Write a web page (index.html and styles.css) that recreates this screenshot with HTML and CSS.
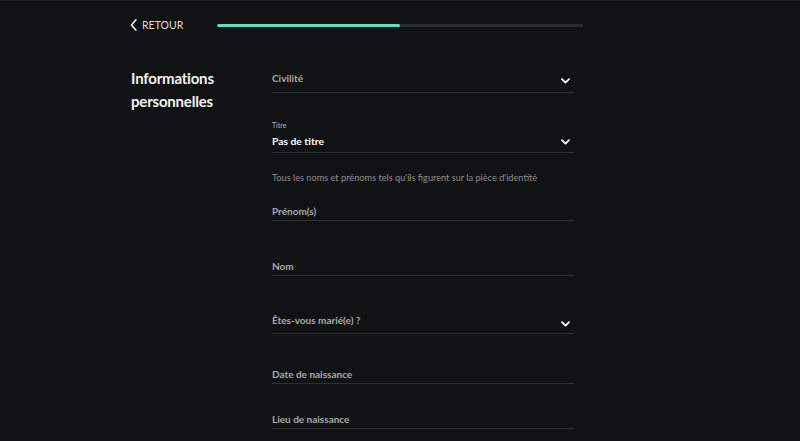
FILE: index.html
```html
<!DOCTYPE html>
<html lang="fr">
<head>
<meta charset="utf-8">
<title>Informations personnelles</title>
<link rel="stylesheet" href="styles.css">
</head>
<body>
<div class="page">
  <header class="topbar">
    <a class="back" href="#">
      <svg class="back-icon" width="7" height="12" viewBox="0 0 7 12"><path d="M5.8 1 1.5 6l4.3 5" fill="none" stroke="#e6e6e6" stroke-width="1.8" stroke-linecap="round" stroke-linejoin="round"/></svg>
      <span>RETOUR</span>
    </a>
    <div class="progress"><div class="progress-fill" style="width:50%"></div></div>
  </header>
  <main class="content">
    <h1 class="section-title">Informations<br>personnelles</h1>
    <form class="form">
      <div class="field select f-civ">
        <span class="label">Civilité</span>
        <svg class="chev" width="9" height="6" viewBox="0 0 9 6"><path d="M1 1.2 4.5 4.6 8 1.2" fill="none" stroke="#fff" stroke-width="1.8" stroke-linecap="round" stroke-linejoin="round"/></svg>
      </div>
      <div class="field select f-titre">
        <div class="stack">
          <span class="mini">Titre</span>
          <span class="value">Pas de titre</span>
        </div>
        <svg class="chev" width="9" height="6" viewBox="0 0 9 6"><path d="M1 1.2 4.5 4.6 8 1.2" fill="none" stroke="#fff" stroke-width="1.8" stroke-linecap="round" stroke-linejoin="round"/></svg>
      </div>
      <p class="helper">Tous les noms et prénoms tels qu'ils figurent sur la pièce d'identité</p>
      <div class="field text f-prenom"><span class="label">Prénom(s)</span></div>
      <div class="field text f-nom"><span class="label">Nom</span></div>
      <div class="field select f-marie">
        <span class="label">Êtes-vous marié(e) ?</span>
        <svg class="chev" width="9" height="6" viewBox="0 0 9 6"><path d="M1 1.2 4.5 4.6 8 1.2" fill="none" stroke="#fff" stroke-width="1.8" stroke-linecap="round" stroke-linejoin="round"/></svg>
      </div>
      <div class="field text f-date"><span class="label">Date de naissance</span></div>
      <div class="field text f-lieu"><span class="label">Lieu de naissance</span></div>
    </form>
  </main>
</div>
</body>
</html>
```
FILE: styles.css
```css
* { box-sizing: border-box; }
html, body { margin: 0; padding: 0; }
body {
  background: #111214;
  font-family: Lato, "Noto Sans", "Liberation Sans", sans-serif;
  color: #fff;
  height: 441px;
  overflow: hidden;
  border-top: 1px solid #1d1e20;
}
.page { padding-left: 130px; }
.topbar {
  display: flex;
  align-items: center;
  height: 16px;
  margin-top: 16px;
}
.back {
  display: flex;
  align-items: center;
  gap: 5px;
  color: #dcdcdc;
  text-decoration: none;
  font-size: 10.5px;
  width: 87px;
}
.progress {
  width: 366px;
  height: 3px;
  margin-top: 1px;
  background: #2b2c2e;
  border-radius: 2px;
  overflow: hidden;
}
.progress-fill { height: 100%; background: #5fe0c6; border-radius: 2px; }
.content { display: flex; }
.section-title {
  width: 141px;
  margin: 34px 0 0 1px;
  font-size: 15px;
  line-height: 23px;
  font-weight: 700;
  letter-spacing: -0.2px;
  color: #f2f2f2;
}
.form { width: 302px; margin: 0; }
.field {
  display: flex;
  align-items: flex-end;
  justify-content: space-between;
  border-bottom: 1px solid #2e2f31;
}
.field.text { padding-bottom: 1px; }
.label {
  font-size: 10px;
  line-height: 16px;
  font-weight: 700;
  color: #a9aaad;
}
.chev { margin-right: 4px; margin-bottom: 2px; }
.stack { display: flex; flex-direction: column; }
.mini { font-size: 7px; line-height: 10px; color: #b5b5b5; }
.value { font-size: 10.3px; line-height: 16px; font-weight: 700; color: #fff; margin-top: 3px; }
.helper {
  margin: 17px 0 0;
  font-size: 9.2px;
  line-height: 16px;
  color: #8d8e91;
}
.f-civ { margin-top: 37px; padding-bottom: 6px; }
.f-titre { margin-top: 27px; padding-bottom: 3px; }
.f-titre .chev { margin-bottom: 4px; }
.f-prenom { margin-top: 17px; }
.f-nom { margin-top: 37px; }
.f-marie { margin-top: 36px; padding-bottom: 5px; }
.f-marie .chev { margin-bottom: 1px; }
.f-date { margin-top: 32px; }
.f-lieu { margin-top: 27px; }
```
